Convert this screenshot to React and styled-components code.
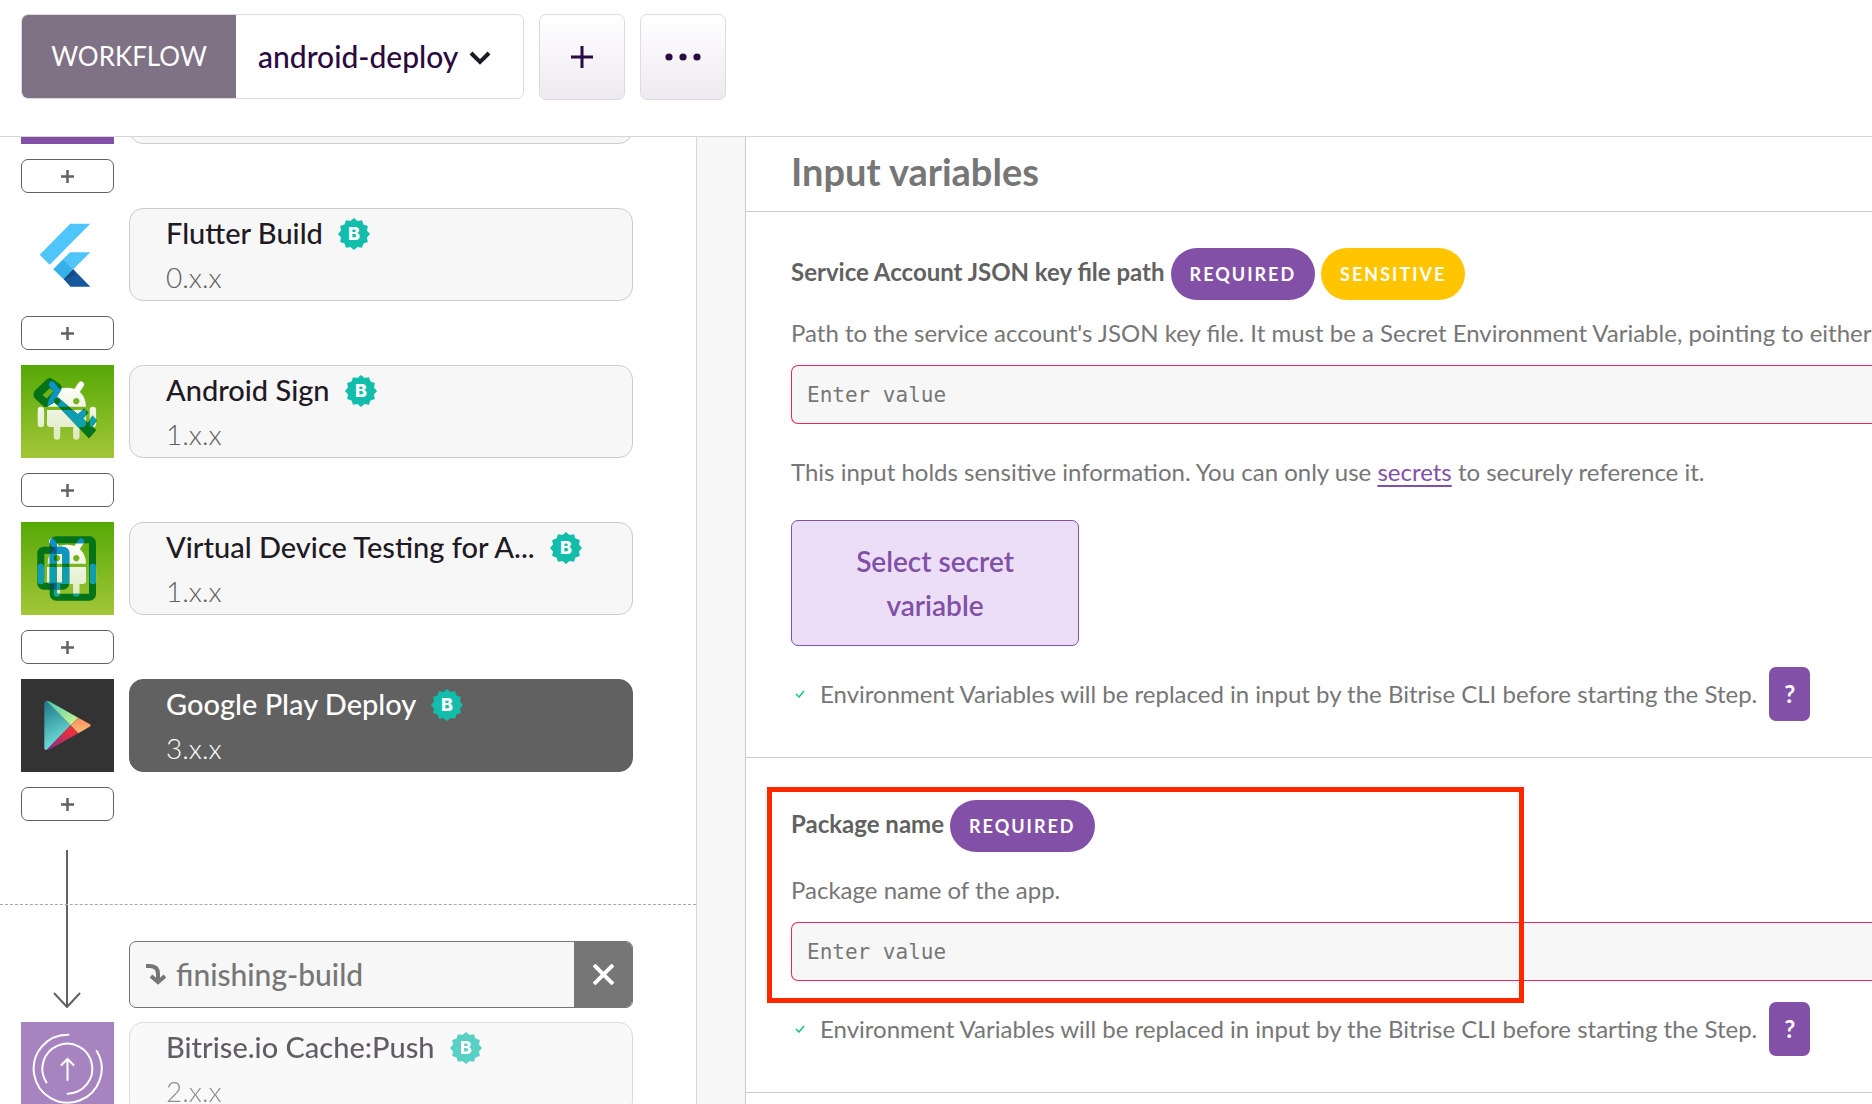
import React from 'react';
import styled, { createGlobalStyle, css } from 'styled-components';

const color = {
  purple: '#8250a6',
  lilac: '#ecdef6',
  yellow: '#ffc500',
  teal: '#12bdab',
  ink: '#2a0a40',
  title: '#1f1a24',
  text: '#767676',
  strong: '#616161',
  line: '#cccccc',
  surface: '#f7f7f7',
  danger: '#f0245e',
  mark: '#ff2600',
};

const GlobalStyle = createGlobalStyle`
  *, *::before, *::after { box-sizing: border-box; }
  body {
    margin: 0;
    background: #ffffff;
    color: ${color.text};
    font-family: Lato, "Open Sans", sans-serif;
    font-size: 24px;
    line-height: 36px;
  }
  button, input, select { font: inherit; color: inherit; margin: 0; }
  button { cursor: pointer; }
  svg { display: block; flex: none; }
`;

const Page = styled.div`
  display: flex;
  flex-direction: column;
  height: 100vh;
  overflow: hidden;
`;

const Toolbar = styled.header`
  flex: none;
  display: flex;
  align-items: flex-start;
  gap: 15px;
  height: 137px;
  padding: 14px 21px 0;
  border-bottom: 1px solid #d6d6d6;
`;

const WorkflowPicker = styled.div`
  display: flex;
  width: 503px;
  height: 85px;
  border: 1px solid #dedae2;
  border-radius: 7px;
  overflow: hidden;
`;

const PickerLabel = styled.label`
  display: flex;
  align-items: center;
  justify-content: center;
  width: 214px;
  padding-bottom: 2px;
  background: #7e7284;
  color: #ffffff;
  font-size: 26px;
`;

const SelectWrap = styled.div`
  position: relative;
  flex: 1;
  display: flex;

  svg {
    position: absolute;
    right: 32px;
    top: 36px;
    pointer-events: none;
  }
`;

const Select = styled.select`
  flex: 1;
  appearance: none;
  padding: 0 60px 2px 22px;
  border: 0;
  background: transparent;
  color: ${color.ink};
  font-size: 30px;
  font-weight: 500;
`;

const ToolButton = styled.button`
  display: flex;
  align-items: center;
  justify-content: center;
  width: 86px;
  height: 86px;
  padding: 0;
  border: 1px solid #dedae2;
  border-radius: 7px;
  background: linear-gradient(#ffffff, #eeeaf0);
`;

const Body = styled.div`
  flex: 1;
  min-height: 0;
  display: flex;
`;

const StepsPane = styled.nav`
  flex: none;
  width: 697px;
  overflow: hidden;
  border-right: 1px solid #d6d6d6;
`;

const Gutter = styled.div`
  flex: none;
  width: 48px;
  background: ${color.surface};
`;

const MainSteps = styled.section`
  margin-top: -86px;
  padding-left: 21px;
  border-bottom: 1px dashed #a8a8a8;
`;

const AfterSteps = styled.section`
  display: flex;
  flex-direction: column;
  gap: 14px;
  padding-left: 21px;
`;

const StepRow = styled.div`
  display: flex;
  gap: 15px;
  opacity: ${(p) => (p.$faded ? 0.7 : 1)};
`;

const Tile = styled.div`
  flex: none;
  width: 93px;
  height: 93px;
  background: ${(p) => p.$bg || 'transparent'};
`;

const StepCard = styled.button`
  display: flex;
  flex-direction: column;
  justify-content: center;
  width: 504px;
  height: 93px;
  padding: 0 36px;
  border: 1px solid ${color.line};
  border-radius: 14px;
  background: ${color.surface};
  text-align: left;
  white-space: nowrap;
  font-size: 29px;
  line-height: 44px;
  ${(p) =>
    p.$selected &&
    css`
      border-color: ${color.strong};
      background: ${color.strong};
      color: #ffffff;
    `}
`;

const StepTitle = styled.span`
  display: flex;
  align-items: center;
  gap: 15px;
  color: ${(p) => (p.$selected ? '#ffffff' : color.title)};
  font-weight: 500;

  svg { margin-top: 2px; }
`;

const StepVersion = styled.span`
  color: ${(p) => (p.$selected ? '#ffffff' : color.strong)};
  font-size: 28px;
  font-weight: 300;
`;

const AddButton = styled.button`
  display: flex;
  align-items: center;
  justify-content: center;
  width: 93px;
  height: 34px;
  margin: 15px 0;
  padding: 0;
  border: 1px solid ${color.strong};
  border-radius: 7px;
  background: #ffffff;
`;

const Stem = styled.div`
  width: 2px;
  height: 54px;
  margin: 29px 0 0 45px;
  background: ${color.strong};
`;

const ChainRow = styled.div`
  display: flex;
  align-items: flex-end;
  gap: 15px;
`;

const ChainBox = styled.div`
  display: flex;
  align-items: center;
  width: 504px;
  height: 67px;
  padding-left: 15px;
  gap: 10px;
  border: 1px solid ${color.text};
  border-radius: 7px;
  overflow: hidden;
  background: ${color.surface};
  font-size: 30px;
  font-weight: 500;
`;

const ChainName = styled.span`
  padding-bottom: 2px;
`;

const RemoveButton = styled.button`
  display: flex;
  align-items: center;
  justify-content: center;
  align-self: stretch;
  width: 58px;
  margin-left: auto;
  padding: 0;
  border: 0;
  background: ${color.text};
`;

const InputsPane = styled.main`
  flex: 1;
  min-width: 0;
  overflow: hidden;
  border-left: 1px solid ${color.line};
`;

const PaneHeading = styled.h2`
  margin: 0;
  padding: 12px 45px 18px;
  border-bottom: 1px solid ${color.line};
  font-size: 38px;
  line-height: 44px;
  font-weight: 700;
`;

const Field = styled.section`
  position: relative;
  padding: ${(p) => (p.$roomy ? 42 : 36)}px 0 36px 45px;
  border-bottom: 1px solid ${color.line};
`;

const FieldHead = styled.div`
  display: flex;
  align-items: baseline;
  gap: 6px;
  margin-bottom: ${(p) => (p.$roomy ? 20 : 15)}px;
  white-space: nowrap;
`;

const FieldLabel = styled.label`
  color: ${color.strong};
  font-weight: 700;
`;

const Pill = styled.span`
  padding: 0 19px;
  border-radius: 26px;
  background: ${(p) => (p.$tone === 'sensitive' ? color.yellow : color.purple)};
  color: #ffffff;
  font-size: 18px;
  line-height: 52px;
  font-weight: 700;
  letter-spacing: 2px;
`;

const Description = styled.p`
  margin: 0;
  overflow: hidden;
  white-space: nowrap;
`;

const TextInput = styled.input`
  display: block;
  width: 100%;
  height: 59px;
  margin: 14px 0 0;
  padding: 0 15px;
  border: 1px solid ${color.danger};
  border-right: 0;
  border-radius: 7px 0 0 7px;
  outline: 0;
  background: ${color.surface};
  font-family: "DejaVu Sans Mono", monospace;
  font-size: 21px;

  &::placeholder { color: ${color.text}; opacity: 1; }
`;

const SecretHint = styled.p`
  margin: 30px 0;

  a {
    color: ${color.purple};
    text-underline-offset: 4px;
    text-decoration-thickness: 2px;
  }
`;

const SecretButton = styled.button`
  display: block;
  width: 288px;
  padding: 18px 50px;
  border: 1px solid ${color.purple};
  border-radius: 7px;
  background: ${color.lilac};
  color: ${color.purple};
  font-size: 28px;
  line-height: 44px;
  font-weight: 600;
`;

const Note = styled.div`
  display: flex;
  align-items: center;
  margin-top: 21px;
  white-space: nowrap;

  svg { margin: 0 15px 0 4px; }
`;

const HelpButton = styled.button`
  width: 41px;
  height: 54px;
  margin-left: 12px;
  padding: 0;
  border: 0;
  border-radius: 7px;
  background: ${color.purple};
  color: #ffffff;
  font-weight: 700;
`;

const Highlight = styled.div`
  position: absolute;
  top: 29px;
  left: 21px;
  width: 757px;
  height: 216px;
  border: 5px solid ${color.mark};
  pointer-events: none;
`;

const badgePoints = Array.from({ length: 24 }, (_, i) => {
  const r = i % 2 ? 13.4 : 16;
  const a = (i * Math.PI) / 12;
  return `${(16 + r * Math.sin(a)).toFixed(2)},${(16 - r * Math.cos(a)).toFixed(2)}`;
}).join(' ');

const Badge = () => (
  <svg width="32" height="32" viewBox="0 0 32 32" aria-label="Bitrise verified">
    <polygon points={badgePoints} fill={color.teal} />
    <text x="16" y="22" textAnchor="middle" fill="#fff" fontFamily="Inter, sans-serif" fontSize="18" fontWeight="800">B</text>
  </svg>
);

const PlusIcon = ({ size, stroke, weight }) => (
  <svg width={size} height={size} viewBox={`0 0 ${size} ${size}`} stroke={stroke} strokeWidth={weight}>
    <path d={`M${size / 2} 0V${size}M0 ${size / 2}H${size}`} />
  </svg>
);

const FlutterArt = () => (
  <svg width="93" height="93" viewBox="0 0 93 93">
    <path d="M49.3 15.7H69.3L28.7 56.7L18.7 46.7Z" fill="#4fc5f9" />
    <path d="M49 44.3H69.3L52.3 61.3L42.3 51Z" fill="#4fc5f9" />
    <path d="M42.3 51L52.3 61.3L42.7 71.3L32.3 61.3Z" fill="#34b1ea" />
    <path d="M42.7 71.3L52.3 61.3L69.3 78.7H49.5Z" fill="#17579b" />
    <path d="M42.7 71.3L52.3 61.3L54.5 67.5Z" fill="#164a85" />
  </svg>
);

const Robot = ({ fill }) => (
  <g fill={fill} stroke={fill} strokeWidth="0">
    <path d="M26.7 41.7C26.7 30 35 22.7 46 22.7S65 30 65 41.7ZM36 33a3.2 3.2 0 1 0 .01 0ZM55.3 33a3.2 3.2 0 1 0 .01 0Z" fillRule="evenodd" />
    <path d="M31 19.5L36.5 27M60 19.5L54.5 28" strokeWidth="6" strokeLinecap="round" />
    <path d="M26 45H65V59Q65 62 62 62H29Q26 62 26 59Z" />
    <path d="M19.9 45V59M71.9 45V59M36 60V71.5M55.3 60V71.5" strokeWidth="6.4" strokeLinecap="round" />
  </g>
);

const AndroidArt = ({ id, children }) => (
  <svg width="93" height="93" viewBox="0 0 93 93">
    <defs>
      <linearGradient id={`${id}-bg`} x1="0" y1="0" x2="0" y2="1">
        <stop offset="0" stopColor="#55a905" />
        <stop offset="1" stopColor="#a4c639" />
      </linearGradient>
      <linearGradient id={`${id}-body`} gradientUnits="userSpaceOnUse" x1="0" y1="18" x2="0" y2="75">
        <stop offset="0" stopColor="#ffffff" />
        <stop offset="1" stopColor="#dde9c0" />
      </linearGradient>
      <linearGradient id={`${id}-over`} gradientUnits="userSpaceOnUse" x1="0" y1="18" x2="0" y2="75">
        <stop offset="0" stopColor="#0e8fd0" />
        <stop offset="1" stopColor="#0fa79b" />
      </linearGradient>
      <mask id={`${id}-mask`} maskUnits="userSpaceOnUse" x="0" y="0" width="93" height="93">
        <Robot fill="#fff" />
      </mask>
    </defs>
    <rect width="93" height="93" fill={`url(#${id}-bg)`} />
    <Robot fill={`url(#${id}-body)`} />
    {children('#04731a')}
    <g mask={`url(#${id}-mask)`}>{children(`url(#${id}-over)`)}</g>
  </svg>
);

const SignArt = () => (
  <AndroidArt id="sign">
    {(paint) => (
      <g fill={paint}>
        <path
          fillRule="evenodd"
          d="M13.5 26L26 14Q28.7 12 31.5 14L39 19Q42 22 39.5 26L36 31.5L75.5 65L68 73.5L33.5 37.5L26.5 41.5Q24 43 21.500 40.500L13.5 33Q11.5 29.5 13.5 26ZM21.5 30L29 23L32.5 26.5L25.5 33.5Z"
        />
        <path d="M53 53L63 43.5L67.5 47.5L61.5 54.5L66 59L71.5 50.5L76 55.5L67.5 67Z" />
      </g>
    )}
  </AndroidArt>
);

const DeviceArt = () => (
  <AndroidArt id="device">
    {(paint) => (
      <g fill="none" stroke={paint} strokeWidth="7">
        <rect x="32.2" y="17.8" width="39.3" height="57.4" rx="3" />
        <rect x="19.8" y="28.2" width="25" height="36" rx="3" />
        <path d="M32.2 24.7V31.7M32.2 60.7V67.7" stroke="#063d5c" strokeOpacity="0.6" />
      </g>
    )}
  </AndroidArt>
);

const PlayArt = () => (
  <svg width="93" height="93" viewBox="0 0 93 93">
    <defs>
      <linearGradient id="play-a" x1="0" y1="0" x2="0.3" y2="1">
        <stop offset="0" stopColor="#1d7488" />
        <stop offset="1" stopColor="#72e4da" />
      </linearGradient>
      <linearGradient id="play-b" x1="0" y1="0" x2="1" y2="1">
        <stop offset="0" stopColor="#45c9b4" />
        <stop offset="1" stopColor="#d8f98f" />
      </linearGradient>
      <linearGradient id="play-c" x1="0" y1="1" x2="1" y2="0">
        <stop offset="0" stopColor="#7c2a94" />
        <stop offset="0.7" stopColor="#e5303f" />
      </linearGradient>
      <linearGradient id="play-d" x1="0" y1="0" x2="0" y2="1">
        <stop offset="0" stopColor="#ff8f66" />
        <stop offset="1" stopColor="#fdbb6f" />
      </linearGradient>
    </defs>
    <path d="M25.5 22L49.7 46.3L25.5 71Q23.3 71 23.3 69V24Q23.3 22 25.5 22Z" fill="url(#play-a)" />
    <path d="M25.5 22Q27 21.7 28.5 22.5L57.3 38.7L49.7 46.3Z" fill="url(#play-b)" />
    <path d="M25.5 71Q27 71.2 28.5 70.5L57.3 54.3L49.7 46.3Z" fill="url(#play-c)" />
    <path d="M57.3 38.7L69 45.3Q70.5 46.3 69 47.4L57.3 54.3L49.7 46.3Z" fill="url(#play-d)" />
  </svg>
);

const CacheArt = () => (
  <svg width="93" height="93" viewBox="0 0 93 93" fill="none" stroke="#fff" strokeWidth="2" strokeLinecap="round">
    <path d="M47.5 12.7A34 34 0 1 0 75.7 29" />
    <path d="M25.5 60.5A25 25 0 1 1 46.5 71.7" />
    <path d="M46.5 58V37M40.5 43L46.5 37L52.5 43" />
  </svg>
);

const NOTE = 'Environment Variables will be replaced in input by the Bitrise CLI before starting the Step.';

const STEPS = [
  { title: 'Flutter Build', version: '0.x.x', art: <FlutterArt /> },
  { title: 'Android Sign', version: '1.x.x', art: <SignArt /> },
  { title: 'Virtual Device Testing for A...', version: '1.x.x', art: <DeviceArt /> },
  { title: 'Google Play Deploy', version: '3.x.x', art: <PlayArt />, bg: '#333333', selected: true },
];

function Step({ title, version, art, bg, selected, faded }) {
  return (
    <StepRow $faded={faded}>
      <Tile $bg={bg}>{art}</Tile>
      <StepCard type="button" $selected={selected}>
        {title && (
          <>
            <StepTitle $selected={selected}>
              {title}
              <Badge />
            </StepTitle>
            <StepVersion $selected={selected}>{version}</StepVersion>
          </>
        )}
      </StepCard>
    </StepRow>
  );
}

const AddStep = () => (
  <AddButton type="button" aria-label="Add step">
    <PlusIcon size={13} stroke={color.strong} weight={2.5} />
  </AddButton>
);

const EnvNote = () => (
  <Note>
    <svg width="10" height="8" viewBox="0 0 10 8" fill="none" stroke="#12c48b" strokeWidth="1.5">
      <path d="M1 4L4 7L9 1" />
    </svg>
    {NOTE}
    <HelpButton type="button" aria-label="Help">?</HelpButton>
  </Note>
);

export default function App() {
  return (
    <Page>
      <GlobalStyle />
      <Toolbar>
        <WorkflowPicker>
          <PickerLabel htmlFor="workflow">WORKFLOW</PickerLabel>
          <SelectWrap>
            <Select id="workflow" defaultValue="android-deploy">
              <option>android-deploy</option>
            </Select>
            <svg width="22" height="14" viewBox="0 0 22 14" fill="none" stroke="#1f1a24" strokeWidth="4">
              <path d="M2 2L11 11L20 2" />
            </svg>
          </SelectWrap>
        </WorkflowPicker>
        <ToolButton type="button" aria-label="Add workflow">
          <PlusIcon size={22} stroke={color.ink} weight={3} />
        </ToolButton>
        <ToolButton type="button" aria-label="More">
          <svg width="38" height="8" viewBox="0 0 38 8" fill={color.ink}>
            <circle cx="5" cy="4" r="3.6" />
            <circle cx="19" cy="4" r="3.6" />
            <circle cx="33" cy="4" r="3.6" />
          </svg>
        </ToolButton>
      </Toolbar>

      <Body>
        <StepsPane>
          <MainSteps>
            <Step bg={color.purple} />
            <AddStep />
            {STEPS.map((step) => (
              <React.Fragment key={step.title}>
                <Step {...step} />
                <AddStep />
              </React.Fragment>
            ))}
            <Stem />
          </MainSteps>
          <AfterSteps>
            <ChainRow>
              <svg width="93" height="103" viewBox="0 0 93 103" fill="none" stroke={color.strong} strokeWidth="2">
                <path d="M46 0V102M33 88L46 102L59 88" />
              </svg>
              <ChainBox>
                <svg width="21" height="21" viewBox="0 0 21 21" fill="none" stroke={color.text} strokeWidth="4">
                  <path d="M1 2H5Q13 2 13 10V18M6 12L13 18L20 12" />
                </svg>
                <ChainName>finishing-build</ChainName>
                <RemoveButton type="button" aria-label="Remove finishing-build">
                  <svg width="21" height="21" viewBox="0 0 21 21" stroke="#fff" strokeWidth="4">
                    <path d="M1 1L20 20M20 1L1 20" />
                  </svg>
                </RemoveButton>
              </ChainBox>
            </ChainRow>
            <Step title="Bitrise.io Cache:Push" version="2.x.x" art={<CacheArt />} bg={color.purple} faded />
          </AfterSteps>
        </StepsPane>
        <Gutter />

        <InputsPane>
          <PaneHeading>Input variables</PaneHeading>
          <Field>
            <FieldHead>
              <FieldLabel htmlFor="key-path">Service Account JSON key file path</FieldLabel>
              <Pill>REQUIRED</Pill>
              <Pill $tone="sensitive">SENSITIVE</Pill>
            </FieldHead>
            <Description>
              Path to the service account's JSON key file. It must be a Secret Environment Variable, pointing to either
            </Description>
            <TextInput id="key-path" placeholder="Enter value" />
            <SecretHint>
              This input holds sensitive information. You can only use <a href="#secrets">secrets</a> to securely
              reference it.
            </SecretHint>
            <SecretButton type="button">Select secret variable</SecretButton>
            <EnvNote />
          </Field>
          <Field $roomy>
            <FieldHead $roomy>
              <FieldLabel htmlFor="package-name">Package name</FieldLabel>
              <Pill>REQUIRED</Pill>
            </FieldHead>
            <Description>Package name of the app.</Description>
            <TextInput id="package-name" placeholder="Enter value" />
            <EnvNote />
            <Highlight />
          </Field>
        </InputsPane>
      </Body>
    </Page>
  );
}
